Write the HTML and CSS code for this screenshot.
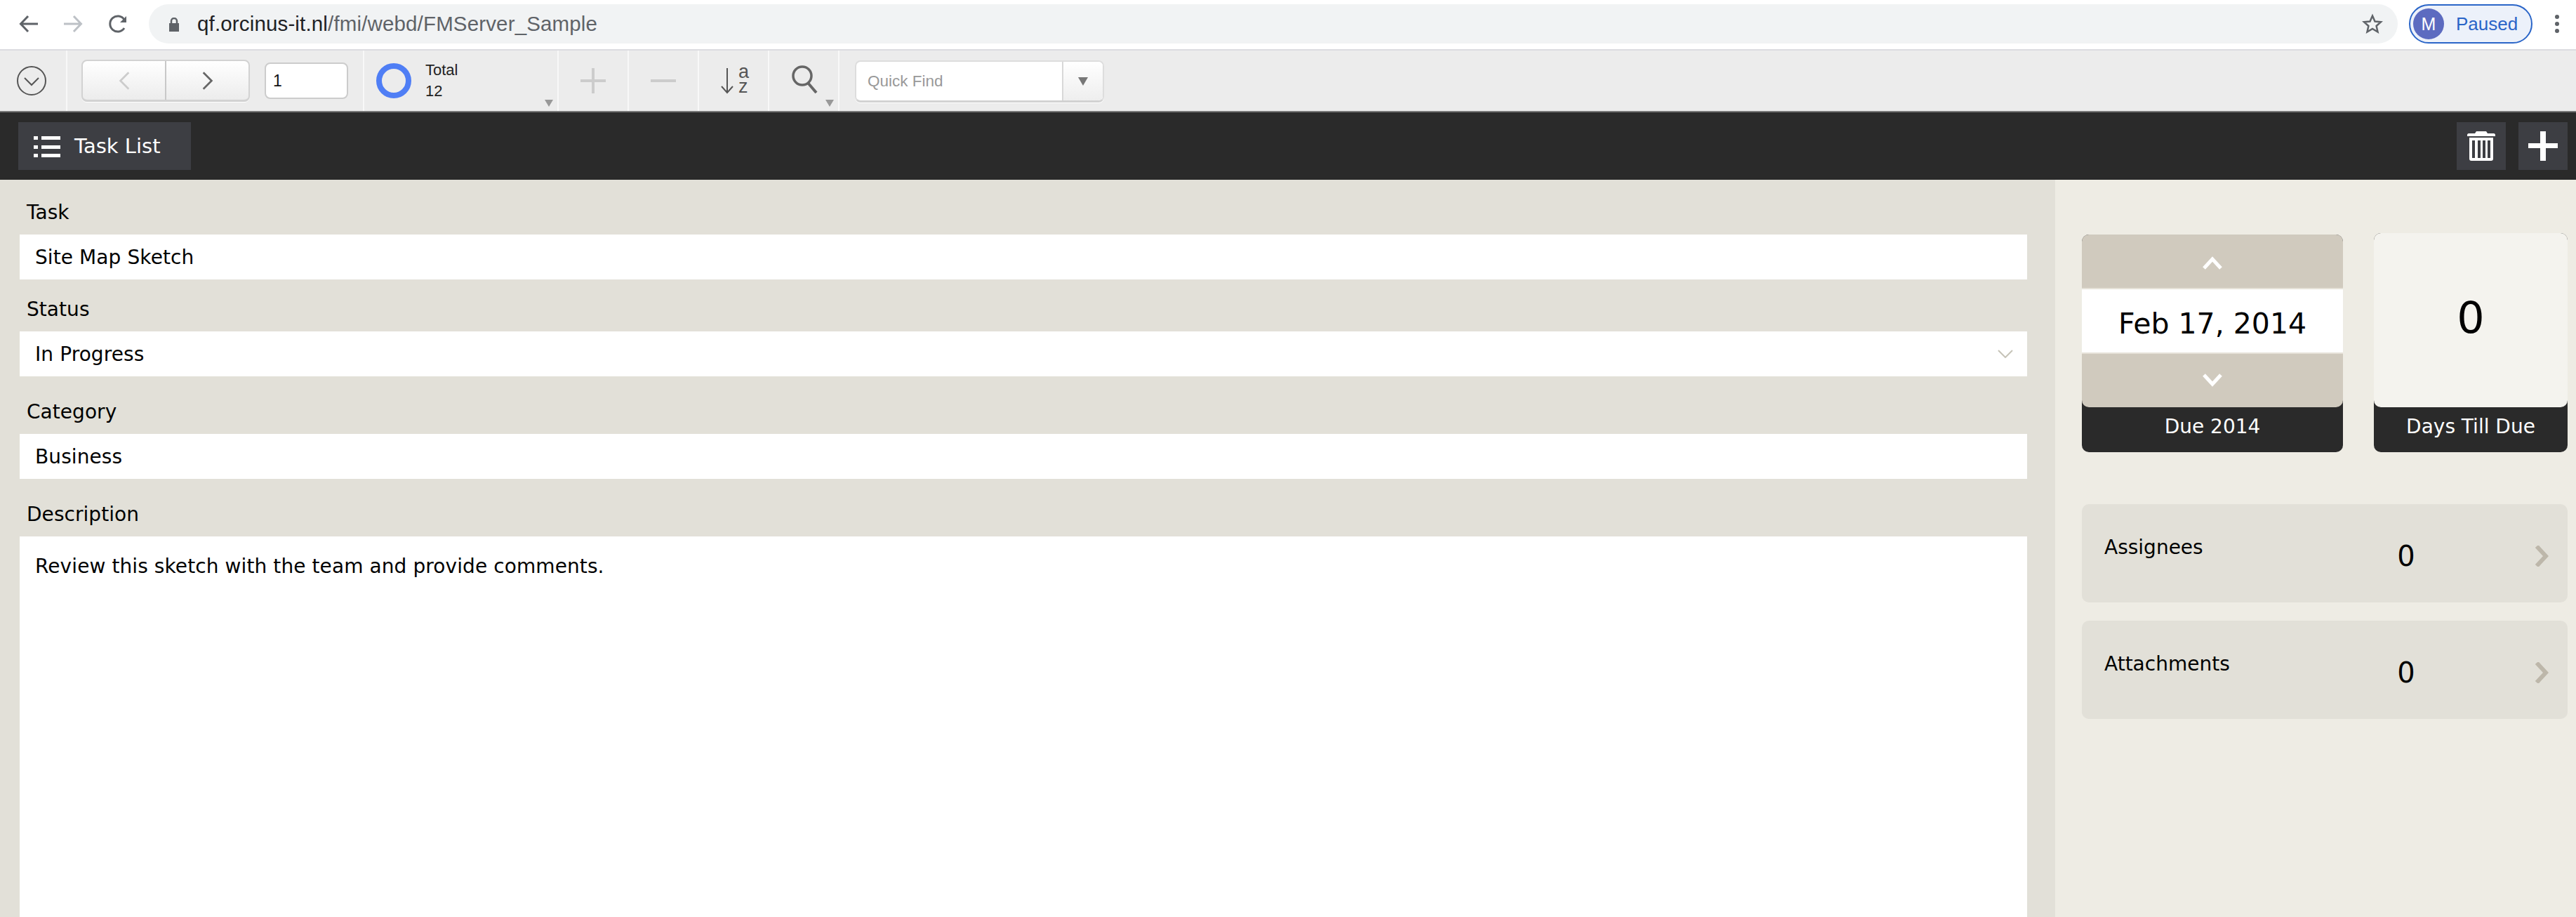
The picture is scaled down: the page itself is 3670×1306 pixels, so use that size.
FILE: index.html
```html
<!DOCTYPE html>
<html lang="en">
<head>
<meta charset="utf-8">
<title>FMServer_Sample</title>
<link rel="stylesheet" href="styles.css">
</head>
<body>
<header class="browser">
  <svg class="b-icon back" viewBox="0 0 28 26"><path d="M27 13H3M13 2 2.500 13 13 24"/></svg>
  <svg class="b-icon forward" viewBox="0 0 28 26"><path d="M1 13h24M15 2l10.500 11L15 24"/></svg>
  <svg class="b-icon reload" viewBox="0 0 28 28"><path d="M23 20a11 11 0 1 1 0-12"/><path class="fill" d="M26 3v9H17z"/></svg>
  <div class="omnibox">
    <svg class="lock" viewBox="0 0 16 20"><path class="fill" d="M1 8h14v12H1z"/><path d="M4 8V5a4 4 0 0 1 8 0v3"/></svg>
    <div class="url"><span class="host">qf.orcinus-it.nl</span>/fmi/webd/FMServer_Sample</div>
    <svg class="star" viewBox="0 0 30 30"><path d="M15 3.500l3.500 8 8.500.8-6.400 5.700 1.900 8.500L15 21.900l-7.500 4.600 1.900-8.500L3 12.300l8.500-.8z"/></svg>
  </div>
  <div class="profile"><span class="avatar">M</span><span class="paused">Paused</span></div>
  <div class="kebab"><i></i><i></i><i></i></div>
</header>

<nav class="toolbar">
  <div class="cell cell-menu">
    <svg class="menu-circle" viewBox="0 0 42 42"><circle cx="21" cy="21" r="20"/><path d="M11 17l10 10 10-10"/></svg>
  </div>
  <div class="cell cell-nav">
    <div class="pager">
      <div class="pager-btn"><svg class="nav-icon off" viewBox="0 0 20 30"><path d="M17 2 4 15l13 13"/></svg></div>
      <div class="pager-btn"><svg class="nav-icon" viewBox="0 0 20 30"><path d="M3 2l13 13L3 28"/></svg></div>
    </div>
    <div class="record">1</div>
  </div>
  <div class="cell cell-total">
    <span class="ring"></span>
    <div class="total"><div>Total</div><div>12</div></div>
    <span class="tri tri-corner"></span>
  </div>
  <div class="cell cell-tool"><svg class="tool plus" viewBox="0 0 36 36"><path d="M18 0v36M0 18h36"/></svg></div>
  <div class="cell cell-tool"><svg class="tool plus" viewBox="0 0 36 36"><path d="M0 18h36"/></svg></div>
  <div class="cell cell-tool cell-sort">
    <svg class="sort-arrow" viewBox="0 0 20 38"><path d="M10 1v35M2 27l8 9 8-9"/></svg>
    <div class="az">a
z</div>
  </div>
  <div class="cell cell-tool">
    <svg class="search" viewBox="0 0 40 40"><circle cx="15" cy="15" r="13"/><path class="handle" d="M23 25l12 14"/></svg>
    <span class="tri tri-corner"></span>
  </div>
  <div class="quickfind">
    <div class="qf-input">Quick Find</div>
    <div class="qf-btn"><span class="tri tri-large"></span></div>
  </div>
</nav>

<div class="appbar">
  <div class="app-btn list-btn">
    <svg class="list-icon" viewBox="0 0 38 32"><path d="M0 2h6v5H0zM11 2h27v5H11zM0 15h6v5H0zM11 15h27v5H11zM0 27h6v5H0zM11 27h27v5H11z"/></svg>
    <span>Task List</span>
  </div>
  <div class="app-actions">
    <div class="app-btn square">
      <svg class="trash" viewBox="0 0 40 42"><path d="M0 5c0-1 1-2 2-2h9l2-3h14l2 3h9c1 0 2 1 2 2v2H0z"/><path fill-rule="evenodd" d="M3 9h34v30c0 2-1 3-3 3H6c-2 0-3-1-3-3zM7 13v25h4V13zM15 13v25h4V13zM22 13v25h4V13zM29 13v25h4V13z"/></svg>
    </div>
    <div class="app-btn square">
      <svg class="add" viewBox="0 0 42 42"><path d="M17 0h8v17h17v7H25v18h-8V24H0v-7h17z"/></svg>
    </div>
  </div>
</div>

<main class="content">
  <section class="form">
    <div class="label">Task</div>
    <div class="field">Site Map Sketch</div>
    <div class="label">Status</div>
    <div class="field field-gap">In Progress
      <svg class="select-arrow" viewBox="0 0 22 12"><path d="M1 1l10 10L21 1"/></svg>
    </div>
    <div class="label">Category</div>
    <div class="field field-gap">Business</div>
    <div class="label">Description</div>
    <div class="field textarea">Review this sketch with the team and provide comments.</div>
  </section>
  <aside class="side">
    <div class="cards">
      <div class="card card-date">
        <div class="stepper stepper-up"><svg class="step-icon" viewBox="0 0 30 20"><path d="M3 18 15 5l12 13"/></svg></div>
        <div class="date">Feb 17, 2014</div>
        <div class="stepper stepper-down"><svg class="step-icon" viewBox="0 0 30 20"><path d="M3 3l12 13L27 3"/></svg></div>
        <div class="caption">Due 2014</div>
      </div>
      <div class="card card-days">
        <div class="days">0</div>
        <div class="caption">Days Till Due</div>
      </div>
    </div>
    <div class="links">
      <div class="link">
        <span class="link-name">Assignees</span><span class="link-count">0</span>
        <svg class="link-chevron" viewBox="0 0 20 30"><path d="M3 1l13 14L3 29"/></svg>
      </div>
      <div class="link">
        <span class="link-name">Attachments</span><span class="link-count">0</span>
        <svg class="link-chevron" viewBox="0 0 20 30"><path d="M3 1l13 14L3 29"/></svg>
      </div>
    </div>
  </aside>
</main>
</body>
</html>
```
FILE: styles.css
```css
* { box-sizing: border-box; }
html, body { margin: 0; height: 1306px; overflow: hidden; background: #e2e0d8; }
body { display: flex; flex-direction: column; font-family: "DejaVu Sans", sans-serif; color: #000; }

/* browser chrome */
.browser { height: 72px; flex: none; display: flex; align-items: flex-start; background: #fff; border-bottom: 2px solid #dcdce0; padding: 6px 0 0 27px; }
.b-icon { width: 28px; height: 28px; margin-top: 14px; fill: none; stroke: #5f6368; stroke-width: 3; flex: none; }
.b-icon .fill { fill: #5f6368; stroke: none; }
.forward { margin-left: 35px; stroke: #bdc1c6; }
.reload { margin-left: 36px; }
.omnibox { margin-left: 30px; width: 3204px; height: 56px; background: #f1f3f4; border-radius: 28px; display: flex; align-items: center; padding-left: 28px; }
.lock { width: 16px; height: 20px; flex: none; margin-top: 1px; fill: none; stroke: #5f6368; stroke-width: 2.500; }
.lock .fill { fill: #5f6368; stroke: none; }
.url { margin-left: 25px; flex: 1; font: 29.500px "Liberation Sans", sans-serif; letter-spacing: .15px; color: #5f6368; white-space: nowrap; }
.host { color: #202124; }
.star { width: 30px; height: 30px; margin-right: 21px; fill: none; stroke: #5f6368; stroke-width: 2.500; }
.profile { margin-left: 16px; width: 176px; height: 56px; border: 2px solid #2a65c8; border-radius: 28px; background: #ecf1fa; display: flex; align-items: center; padding-left: 4px; }
.avatar { width: 44px; height: 44px; border-radius: 50%; background: #5c6bc0; color: #fff; font: 25px "Liberation Sans", sans-serif; display: flex; align-items: center; justify-content: center; }
.paused { margin-left: 17px; font: 26px "Liberation Sans", sans-serif; color: #2a65c8; }
.kebab { margin: 15px 0 0 32px; display: flex; flex-direction: column; gap: 4px; }
.kebab i { width: 6px; height: 6px; border-radius: 50%; background: #5f6368; }

/* FileMaker toolbar */
.toolbar { height: 88px; flex: none; display: flex; align-items: stretch; background: #ececec; border-bottom: 2px solid #777; }
.cell { position: relative; flex: none; display: flex; align-items: center; justify-content: center; border-right: 2px solid #f8f8f8; }
.cell-menu { width: 96px; padding-right: 4px; }
.menu-circle { width: 42px; height: 42px; fill: none; stroke: #555; stroke-width: 2; }
.cell-nav { width: 423px; justify-content: flex-start; padding-left: 20px; gap: 21px; }
.pager { width: 240px; height: 60px; display: flex; border: 2px solid #d2d2d2; border-bottom-width: 3px; border-radius: 8px; background: linear-gradient(#fff, #ececec); box-shadow: 0 1px 0 #fff; }
.pager-btn { flex: 1; display: flex; align-items: center; justify-content: center; }
.pager-btn + .pager-btn { border-left: 2px solid #c8c8c8; }
.nav-icon { width: 18px; height: 28px; fill: none; stroke: #666; stroke-width: 3; }
.nav-icon.off { stroke: #ccc; }
.record { width: 119px; height: 52px; background: #fff; border: 2px solid #ccc; border-radius: 8px; font: 23px/48px "Liberation Sans", sans-serif; padding-left: 10px; color: #111; }
.cell-total { width: 277px; justify-content: flex-start; padding-left: 17px; }
.ring { width: 50px; height: 50px; border-radius: 50%; border: 8px solid #4f7ef5; flex: none; }
.total { margin-left: 20px; font: 22px/30px "Liberation Sans", sans-serif; color: #222; }
.tri { display: block; width: 0; height: 0; border-left: 6px solid transparent; border-right: 6px solid transparent; border-top: 10px solid #999; }
.tri-corner { position: absolute; right: 6px; bottom: 6px; }
.tri-large { border-left-width: 7px; border-right-width: 7px; border-top: 12px solid #777; }
.cell-tool { width: 100px; }
.tool { width: 36px; height: 36px; }
.plus { fill: none; stroke: #ccc; stroke-width: 4; }
.cell-sort { gap: 6px; padding-left: 3px; }
.sort-arrow { width: 20px; height: 38px; fill: none; stroke: #555; stroke-width: 2; }
.az { font: 27px/21px "Liberation Sans", sans-serif; white-space: pre-line; color: #555; margin-top: -4px; }
.search { width: 40px; height: 40px; margin: -4px 0 0 6px; fill: none; stroke: #666; stroke-width: 3.500; }
.search .handle { stroke-width: 4; }
.quickfind { margin: 14px 0 0 22px; width: 355px; height: 60px; display: flex; border: 2px solid #ddd; border-bottom: 3px solid #d2d2d2; border-radius: 8px; background: #fff; box-shadow: 0 1px 0 #fff; }
.qf-input { flex: 1; font: 22.500px/56px "Liberation Sans", sans-serif; color: #999; padding-left: 16px; }
.qf-btn { width: 58px; border-left: 2px solid #d8d8d8; background: linear-gradient(#fff, #eee); display: flex; align-items: center; justify-content: center; border-radius: 0 6px 6px 0; }

/* app header */
.appbar { height: 96px; flex: none; display: flex; align-items: center; justify-content: space-between; background: #2a2a2a; padding: 0 12px 0 26px; }
.app-btn { height: 68px; background: #3d3e43; display: flex; align-items: center; justify-content: center; }
.list-btn { width: 246px; justify-content: flex-start; padding-left: 22px; gap: 20px; color: #fff; font-size: 29px; }
.list-icon { width: 38px; height: 32px; fill: #fff; }
.app-actions { display: flex; gap: 18px; }
.square { width: 70px; }
.trash { width: 40px; height: 42px; fill: #fff; }
.add { width: 42px; height: 42px; fill: #fff; }

/* form */
.content { flex: 1; display: flex; min-height: 0; }
.form { flex: 1; padding: 26px 40px 0 28px; display: flex; flex-direction: column; background: #e2e0d8; }
.label { height: 40px; line-height: 42px; margin-bottom: 12px; padding-left: 10px; font-size: 28px; letter-spacing: .05px; }
.field { position: relative; height: 64px; line-height: 65px; background: #fff; padding-left: 22px; font-size: 28px; letter-spacing: .09px; margin-bottom: 22px; flex: none; }
.field-gap { margin-bottom: 30px; }
.select-arrow { position: absolute; right: 20px; top: 26px; width: 22px; height: 12px; fill: none; stroke: #c6c3b8; stroke-width: 2; }
.textarea { flex: 1; margin-bottom: 0; line-height: 40px; padding-top: 23px; }

/* side */
.side { width: 742px; flex: none; background: #eeece4; padding: 76px 12px 0 38px; }
.cards { display: flex; gap: 44px; align-items: flex-start; }
.card { border-radius: 10px; overflow: hidden; background: #2a2a2a; flex: none; }
.card-date { width: 372px; margin-top: 2px; }
.stepper { height: 76px; background: #d0cabe; display: flex; align-items: center; justify-content: center; }
.stepper-down { border-radius: 0 0 10px 10px; }
.stepper-up .step-icon { margin-top: 3px; }
.stepper-down .step-icon { margin-bottom: 2px; }
.step-icon { width: 30px; height: 20px; fill: none; stroke: #fff; stroke-width: 5; }
.date { height: 94px; line-height: 98px; background: #fff; border-top: 2px solid #e6e2d8; border-bottom: 2px solid #e6e2d8; text-align: center; font-size: 41px; overflow: hidden; }
.caption { height: 64px; line-height: 56px; text-align: center; color: #fff; font-size: 28px; }
.card-days { width: 276px; }
.days { height: 248px; background: #f4f3ee; border-radius: 0 0 10px 10px; text-align: center; font-size: 62px; line-height: 242px; }
.links { margin-top: 74px; display: flex; flex-direction: column; gap: 26px; }
.link { height: 140px; border-radius: 10px; background: #e2e0d8; display: grid; grid-template-columns: 390px 80px 1fr 20px; padding: 42px 27px 0 32px; }
.link-name { grid-column: 1; font-size: 28px; line-height: 40px; }
.link-count { grid-column: 2; text-align: center; font-size: 40px; line-height: 56px; margin-top: 4px; }
.link-chevron { grid-column: 4; width: 20px; height: 30px; margin-top: 17px; fill: none; stroke: #bdb7aa; stroke-width: 6; }
```
